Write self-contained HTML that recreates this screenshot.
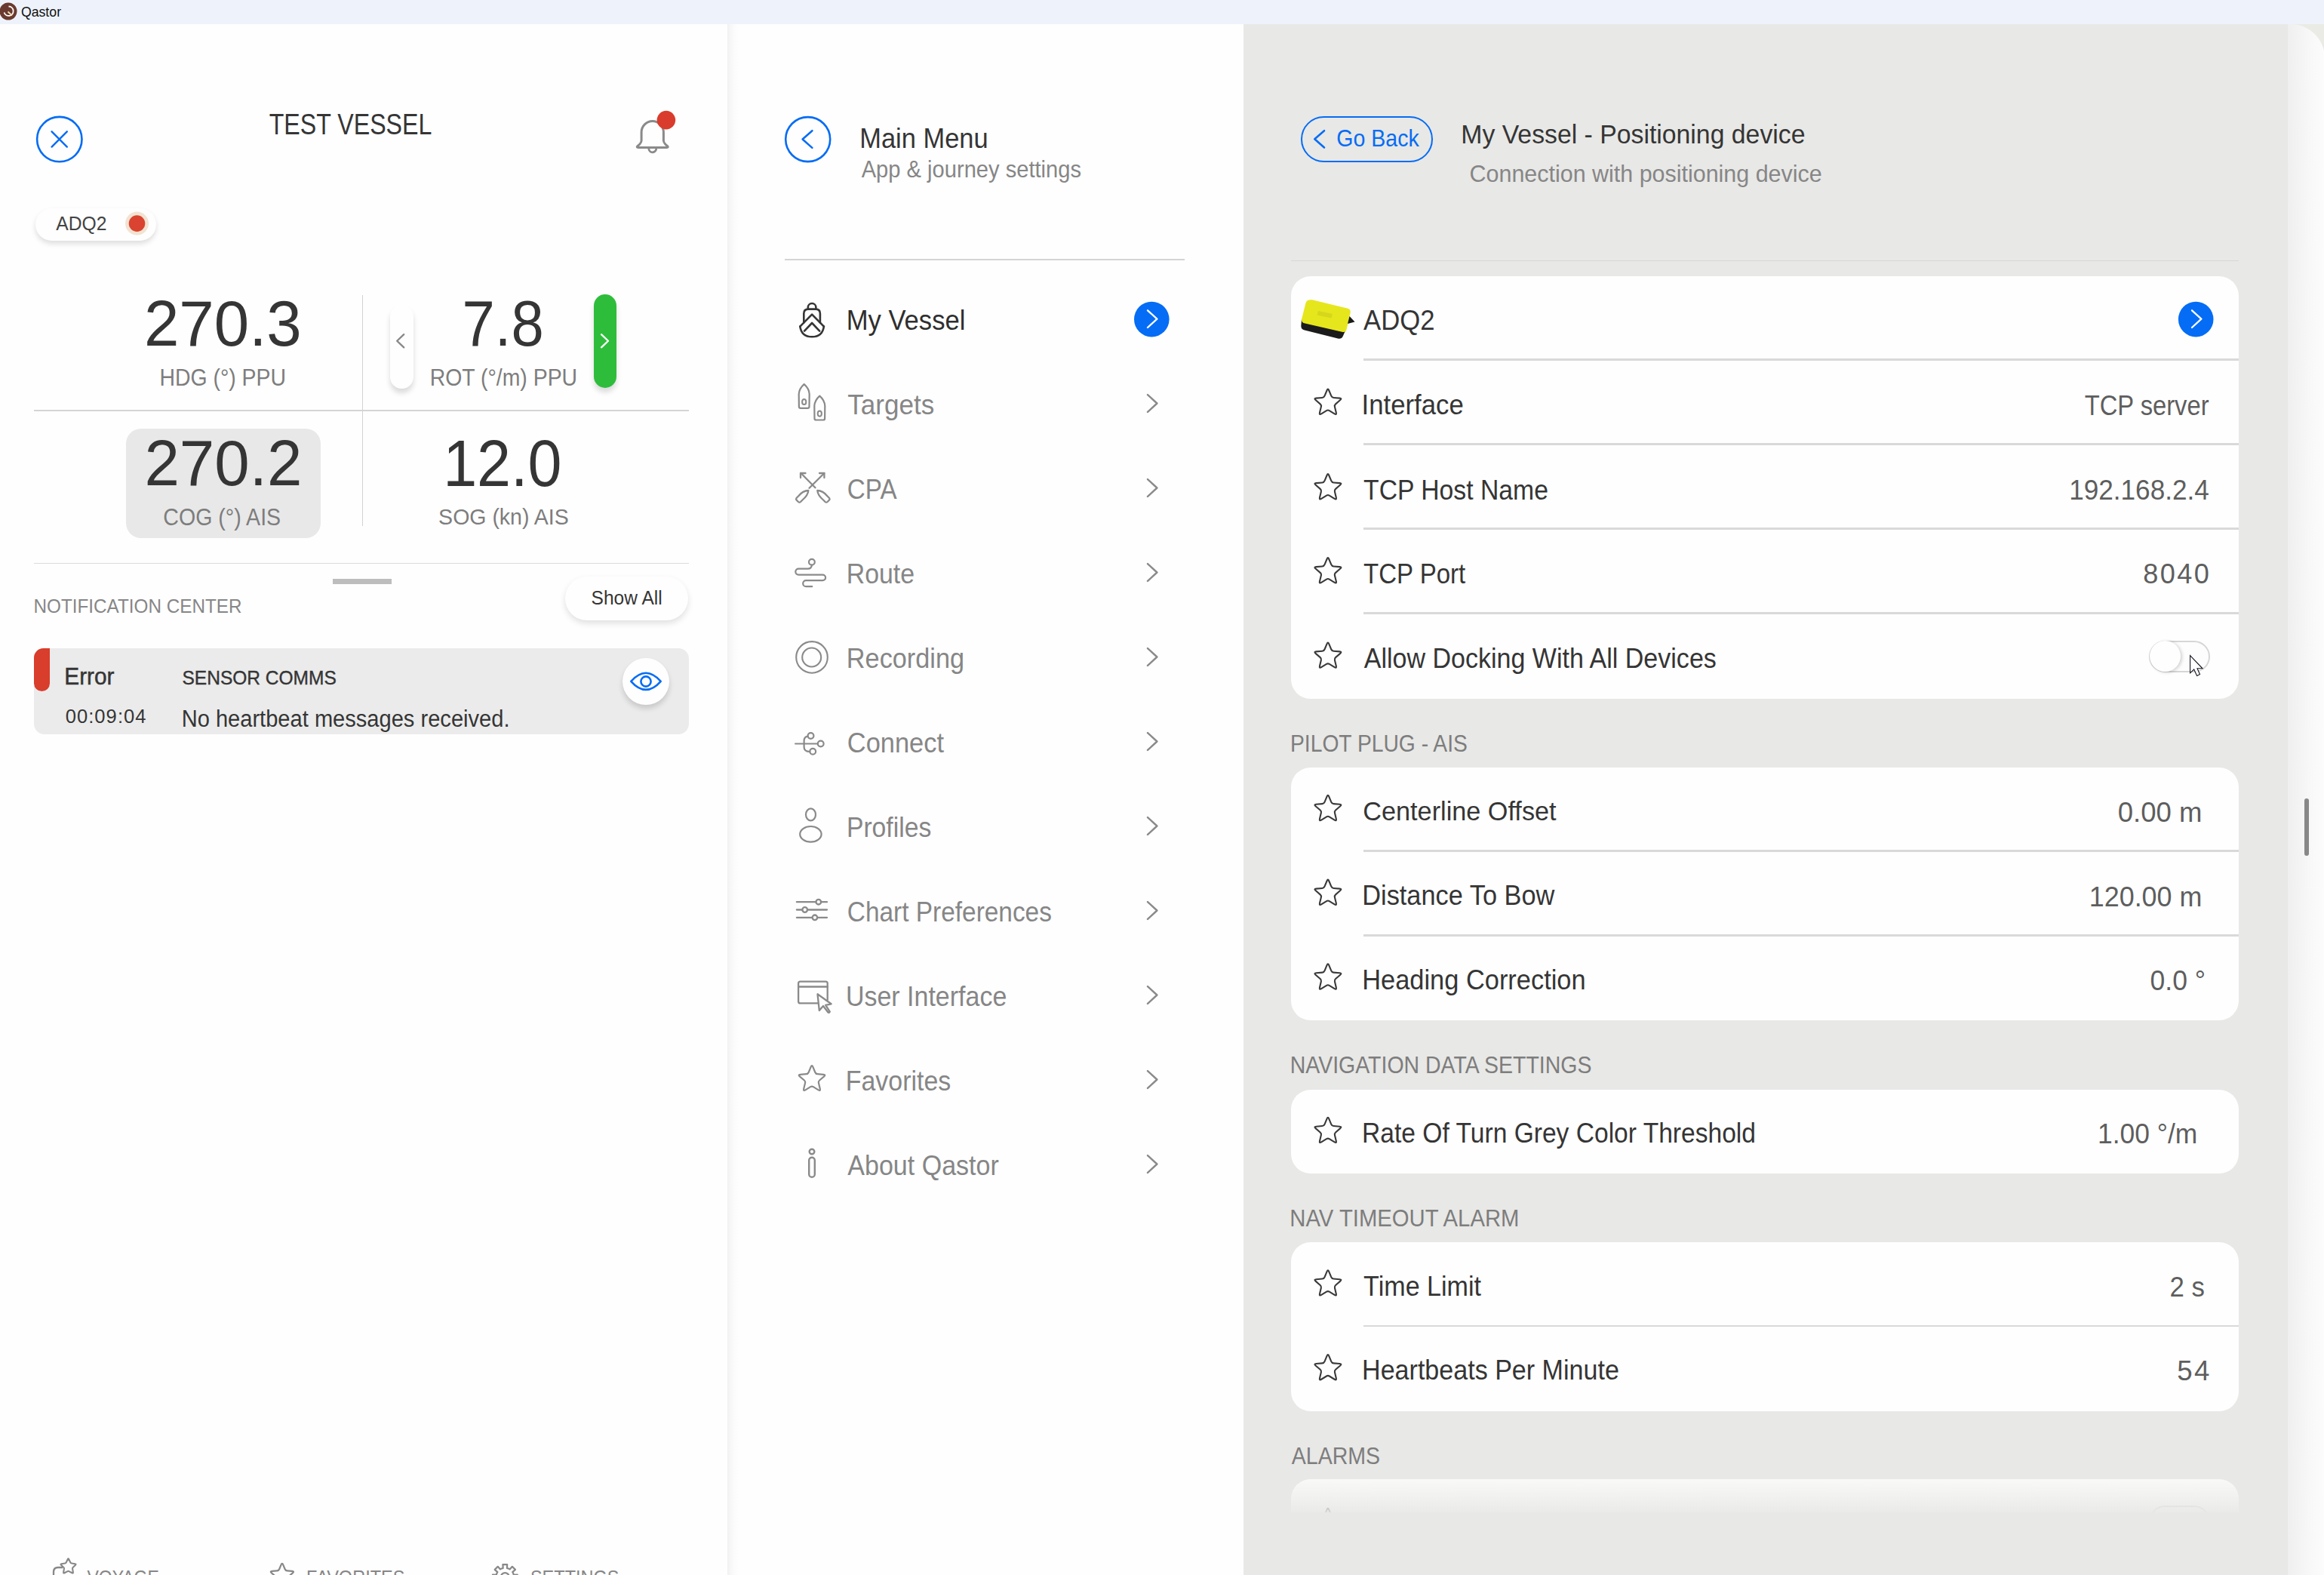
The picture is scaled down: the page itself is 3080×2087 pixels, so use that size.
<!DOCTYPE html>
<html><head><meta charset="utf-8"><style>
html,body{margin:0;padding:0;width:3080px;height:2087px;overflow:hidden;background:#fefefe}
#root>div{position:absolute}
svg{position:absolute;left:0;top:0}
text{font-family:"Liberation Sans",sans-serif;white-space:pre}
</style></head><body><div id="root">
<div style="left:0px;top:0px;width:3080px;height:32px;background:#eef3fb"></div>
<div style="left:0px;top:32px;width:964px;height:2055px;background:#fefefe"></div>
<div style="left:964px;top:32px;width:684px;height:2055px;background:linear-gradient(90deg,#f1f1f1 0px,#f7f7f7 4px,#fcfcfc 10px,#fefefe 16px)"></div>
<div style="left:1648px;top:32px;width:1384px;height:2055px;background:#e8e8e6"></div>
<div style="left:3032px;top:32px;width:48px;height:60px;background:#eaebe5"></div>
<div style="left:3032px;top:32px;width:49px;height:2055px;border-top-right-radius:45px;background:linear-gradient(90deg,#efefef 0px,#f2f2f2 10px,#f8f8f8 30px,#fcfcfc 48px)"></div>
<div style="left:47.2px;top:276.4px;width:160px;height:43px;background:#fefefe;border-radius:22px;box-shadow:0 4px 7px rgba(0,0,0,0.13)"></div>
<div style="left:479.5px;top:391px;width:1.3px;height:306px;background:#d2d2d2"></div>
<div style="left:45px;top:543px;width:868px;height:2px;background:#d4d4d4"></div>
<div style="left:45px;top:745.5px;width:868px;height:1.5px;background:#dcdcdc"></div>
<div style="left:517px;top:404px;width:31px;height:110.5px;background:#fefefe;border-radius:15.5px;box-shadow:0 6px 7px rgba(0,0,0,0.14)"></div>
<div style="left:787px;top:390.4px;width:30px;height:124px;background:#2ebd3b;border-radius:15px;box-shadow:0 6px 7px rgba(0,0,0,0.14)"></div>
<div style="left:166.5px;top:568px;width:258.5px;height:145px;background:#e8e8e8;border-radius:20px"></div>
<div style="left:441px;top:767px;width:78px;height:6.5px;background:#bdbdbd"></div>
<div style="left:749px;top:764px;width:162.5px;height:58px;background:#fefefe;border-radius:29px;box-shadow:0 4px 8px rgba(0,0,0,0.12)"></div>
<div style="left:45px;top:859px;width:867.5px;height:113.5px;background:#ebebeb;border-radius:14px"></div>
<div style="left:45px;top:859px;width:21px;height:56.5px;background:#d93d2b;border-radius:13px 0 11px 11px"></div>
<div style="left:824.8px;top:871.5px;width:62px;height:62px;background:#fefefe;border-radius:50%;box-shadow:0 5px 7px rgba(0,0,0,0.15)"></div>
<div style="left:1040px;top:343px;width:530px;height:2px;background:#d4d4d4"></div>
<div style="left:1711px;top:345px;width:1256px;height:1px;background:#d7d7d7"></div>
<div style="left:1711px;top:366px;width:1256px;height:560px;background:#fefefe;border-radius:26px"></div>
<div style="left:1711px;top:1017px;width:1256px;height:335px;background:#fefefe;border-radius:26px"></div>
<div style="left:1711px;top:1444px;width:1256px;height:110.5px;background:#fefefe;border-radius:26px"></div>
<div style="left:1711px;top:1646px;width:1256px;height:223.5px;background:#fefefe;border-radius:26px"></div>
<div style="left:1711px;top:1960px;width:1256px;height:200px;background:#fefefe;border-radius:26px"></div>
<div style="left:1807px;top:475.3px;width:1160px;height:2.6px;background:#d9d9d9"></div>
<div style="left:1807px;top:587.3px;width:1160px;height:2.6px;background:#d9d9d9"></div>
<div style="left:1807px;top:699.2px;width:1160px;height:2.6px;background:#d9d9d9"></div>
<div style="left:1807px;top:811.2px;width:1160px;height:2.6px;background:#d9d9d9"></div>
<div style="left:1807px;top:1126px;width:1160px;height:2.6px;background:#d9d9d9"></div>
<div style="left:1807px;top:1238px;width:1160px;height:2.6px;background:#d9d9d9"></div>
<div style="left:1807px;top:1755.5px;width:1160px;height:2.6px;background:#d9d9d9"></div>
<div style="left:1724px;top:153.6px;width:175.3px;height:61.8px;box-sizing:border-box;border:2.6px solid #056cf5;border-radius:31px"></div>
<div style="left:2848px;top:848.6px;width:80.6px;height:42px;box-sizing:border-box;border:2px solid #d6d6d6;border-radius:21px;background:#fdfdfd"></div>
<div style="left:2848.5px;top:849px;width:41px;height:41px;border-radius:50%;background:#fefefe;box-shadow:2px 1px 4px rgba(0,0,0,0.18)"></div>
<div style="left:2848px;top:1995px;width:80.6px;height:42px;box-sizing:border-box;border:2px solid #d6d6d6;border-radius:21px;background:#fdfdfd"></div>
<div style="left:3054px;top:1057.7px;width:6px;height:76.3px;background:#888;border-radius:3px"></div>
</div>
<svg width="3080" height="2087" viewBox="0 0 3080 2087">
<circle cx="11" cy="15" r="11.5" fill="#6b3a2f"/><path d="M5.5,16.5 A6.2,6.2 0 1 0 11.5,8.5" fill="none" stroke="#fff" stroke-width="1.8"/><path d="M10.5,15.5 L16,20.5" stroke="#f3dcb0" stroke-width="1.8"/>
<circle cx="78.8" cy="184.6" r="29.7" fill="none" stroke="#056cf5" stroke-width="2.6"/>
<path d="M68.6,174.3 L88.8,194.6 M88.8,174.3 L68.6,194.6" stroke="#056cf5" stroke-width="2.4" stroke-linecap="round"/>
<path d="M850.1,186.5 L850.1,175.2 A14.65,14.65 0 0 1 879.4,175.2 L879.4,186.5 Q879.6,189 882,191.3 L884.6,193.6 Q886.2,195.4 883.8,195.4 L845.7,195.4 Q843.3,195.4 844.9,193.6 L847.5,191.3 Q849.9,189 850.1,186.5 Z" fill="none" stroke="#8a8a8a" stroke-width="3" stroke-linejoin="round"/>
<path d="M859.8,196.8 A5,5 0 0 0 869.8,196.8" fill="none" stroke="#8a8a8a" stroke-width="2.8"/>
<circle cx="882.9" cy="159.1" r="12.3" fill="#d93c2c"/>
<circle cx="181.5" cy="296.1" r="15.5" fill="#f2e3d2"/><circle cx="181.5" cy="296.1" r="10.8" fill="#d9432f"/>
<path d="M535.2,443.2 L526.2,451.75 L535.2,460.3" fill="none" stroke="#888" stroke-width="2.4" stroke-linecap="round" stroke-linejoin="round"/>
<path d="M797,443.2 L806,451.75 L797,460.3" fill="none" stroke="#fff" stroke-width="2.3" stroke-linecap="round" stroke-linejoin="round"/>
<path d="M836.3,902.8 Q856,880.6 875.7,902.8 Q856,925 836.3,902.8 Z" fill="none" stroke="#056cf5" stroke-width="2.6" stroke-linejoin="round"/><circle cx="856" cy="903" r="6.6" fill="none" stroke="#056cf5" stroke-width="2.6"/>
<path d="M71,2087 L71,2083 Q71,2077 77,2077 L83,2077" fill="none" stroke="#888" stroke-width="2.3"/>
<path d="M89.70,2066.21 Q90.50,2064.60 91.30,2066.21 L93.39,2070.45 Q93.83,2071.35 94.82,2071.49 L99.50,2072.17 Q101.28,2072.43 99.99,2073.69 L96.60,2076.99 Q95.89,2077.68 96.06,2078.67 L96.86,2083.33 Q97.16,2085.10 95.57,2084.26 L91.39,2082.06 Q90.50,2081.60 89.61,2082.06 L85.43,2084.26 Q83.84,2085.10 84.14,2083.33 L84.94,2078.67 Q85.11,2077.68 84.40,2076.99 L81.01,2073.69 Q79.72,2072.43 81.50,2072.17 L86.18,2071.49 Q87.17,2071.35 87.61,2070.45Z" fill="none" stroke="#888" stroke-width="2.1" stroke-linejoin="round"/>
<path d="M372.59,2073.34 Q373.90,2070.20 375.21,2073.34 L377.65,2079.21 Q378.49,2081.24 380.68,2081.41 L387.02,2081.92 Q390.41,2082.19 387.83,2084.41 L383.00,2088.54 Q381.33,2089.97 381.84,2092.11 L383.31,2098.29 Q384.10,2101.60 381.20,2099.83 L375.78,2096.52 Q373.90,2095.37 372.02,2096.52 L366.60,2099.83 Q363.70,2101.60 364.49,2098.29 L365.96,2092.11 Q366.47,2089.97 364.80,2088.54 L359.97,2084.41 Q357.39,2082.19 360.78,2081.92 L367.12,2081.41 Q369.31,2081.24 370.15,2079.21Z" fill="none" stroke="#888" stroke-width="2.2" stroke-linejoin="round"/>
<path d="M665.56,2078.21 L666.65,2077.90 L666.42,2073.05 L672.18,2073.05 L671.95,2077.90 L673.04,2078.21 L674.57,2078.84 L675.55,2079.39 L678.82,2075.80 L682.90,2079.88 L679.31,2083.15 L679.86,2084.13 L680.49,2085.66 L680.80,2086.75 L685.65,2086.52 L685.65,2092.28 L680.80,2092.05 L680.49,2093.14 L679.86,2094.67 L679.31,2095.65 L682.90,2098.92 L678.82,2103.00 L675.55,2099.41 L674.57,2099.96 L673.04,2100.59 L671.95,2100.90 L672.18,2105.75 L666.42,2105.75 L666.65,2100.90 L665.56,2100.59 L664.03,2099.96 L663.05,2099.41 L659.78,2103.00 L655.70,2098.92 L659.29,2095.65 L658.74,2094.67 L658.11,2093.14 L657.80,2092.05 L652.95,2092.28 L652.95,2086.52 L657.80,2086.75 L658.11,2085.66 L658.74,2084.13 L659.29,2083.15 L655.70,2079.88 L659.78,2075.80 L663.05,2079.39 L664.03,2078.84Z" fill="none" stroke="#888" stroke-width="2.2" stroke-linejoin="round"/><circle cx="669.3" cy="2089.4" r="5.3" fill="none" stroke="#888" stroke-width="2.2"/>
<circle cx="1070.7" cy="184.6" r="29.5" fill="none" stroke="#056cf5" stroke-width="2.6"/>
<path d="M1076.4,173.2 L1063.6,184.55 L1076.4,195.9" fill="none" stroke="#056cf5" stroke-width="2.5" stroke-linecap="round" stroke-linejoin="round"/>
<circle cx="1526.3" cy="423.1" r="23.3" fill="#056cf5"/>
<path d="M1521,411.3 L1533.4,422.65 L1521,434" fill="none" stroke="#fff" stroke-width="2.3" stroke-linecap="round" stroke-linejoin="round"/>
<path d="M1521,523.1 L1533.4,534.5 L1521,545.9" fill="none" stroke="#8a8a8a" stroke-width="2.4" stroke-linecap="round" stroke-linejoin="round"/>
<path d="M1521,635.1 L1533.4,646.5 L1521,657.9" fill="none" stroke="#8a8a8a" stroke-width="2.4" stroke-linecap="round" stroke-linejoin="round"/>
<path d="M1521,747.1 L1533.4,758.5 L1521,769.9" fill="none" stroke="#8a8a8a" stroke-width="2.4" stroke-linecap="round" stroke-linejoin="round"/>
<path d="M1521,859.1 L1533.4,870.5 L1521,881.9" fill="none" stroke="#8a8a8a" stroke-width="2.4" stroke-linecap="round" stroke-linejoin="round"/>
<path d="M1521,971.1 L1533.4,982.5 L1521,993.9" fill="none" stroke="#8a8a8a" stroke-width="2.4" stroke-linecap="round" stroke-linejoin="round"/>
<path d="M1521,1083.1 L1533.4,1094.5 L1521,1105.9" fill="none" stroke="#8a8a8a" stroke-width="2.4" stroke-linecap="round" stroke-linejoin="round"/>
<path d="M1521,1195.1 L1533.4,1206.5 L1521,1217.9" fill="none" stroke="#8a8a8a" stroke-width="2.4" stroke-linecap="round" stroke-linejoin="round"/>
<path d="M1521,1307.1 L1533.4,1318.5 L1521,1329.9" fill="none" stroke="#8a8a8a" stroke-width="2.4" stroke-linecap="round" stroke-linejoin="round"/>
<path d="M1521,1419.1 L1533.4,1430.5 L1521,1441.9" fill="none" stroke="#8a8a8a" stroke-width="2.4" stroke-linecap="round" stroke-linejoin="round"/>
<path d="M1521,1531.1 L1533.4,1542.5 L1521,1553.9" fill="none" stroke="#8a8a8a" stroke-width="2.4" stroke-linecap="round" stroke-linejoin="round"/>
<g fill="none" stroke="#353535" stroke-width="2.6" stroke-linejoin="round" stroke-linecap="round"><path d="M1070.8,409 L1070.8,407.3 A5.3,5.3 0 0 1 1081.4,407.3 L1081.4,409"/><path d="M1065.3,427.5 L1065.3,415.5 Q1065.3,409.6 1071.3,409.6 L1080.9,409.6 Q1086.9,409.6 1086.9,415.5 L1086.9,427.5"/><path d="M1060.3,432.6 L1076.1,416.6 L1091.9,432.6"/><path d="M1066,438.6 L1076.1,428 L1086.2,438.6"/><path d="M1060.3,432.6 Q1062.3,446.3 1076.1,446.3 Q1089.9,446.3 1091.9,432.6"/></g>
<path d="M1058.9,539 L1058.7,522.28 Q1059.2,514.8 1065.7,509.2 Q1072.2,514.8 1072.7,522.28 L1072.5,539 Q1072.5,540.8 1070.2,540.8 L1061.2,540.8 Q1058.9,540.8 1058.9,539 Z" fill="none" stroke="#8a8a8a" stroke-width="2.2" stroke-linejoin="round"/><ellipse cx="1065.7" cy="532.48" rx="2.6" ry="3.6" fill="none" stroke="#8a8a8a" stroke-width="2"/>
<path d="M1079.5,554.6999999999999 L1079.3,537.8059999999999 Q1079.8,530.26 1086.3,524.6 Q1092.8,530.26 1093.3,537.8059999999999 L1093.1,554.6999999999999 Q1093.1,556.4999999999999 1090.8,556.4999999999999 L1081.8,556.4999999999999 Q1079.5,556.4999999999999 1079.5,554.6999999999999 Z" fill="none" stroke="#8a8a8a" stroke-width="2.2" stroke-linejoin="round"/><ellipse cx="1086.3" cy="548.096" rx="2.6" ry="3.6" fill="none" stroke="#8a8a8a" stroke-width="2"/>
<g fill="none" stroke="#8a8a8a" stroke-width="2.3" stroke-linecap="round" stroke-linejoin="round"><path d="M1061.5,627 L1080.5,646.3 M1092.4,627 L1072.5,646.8"/><path d="M1061,633 L1061,627 L1067.5,627 M1086,627 L1092.4,627 L1092.4,633"/><path d="M1071.3,650 Q1064,650 1058,657.5 L1055.5,660 Q1054.5,661.5 1056,663 L1058,665 Q1059.5,666.3 1061,665 L1063.5,662.5 Q1071,656 1071.3,650 Z"/><path d="M1083.3,650 Q1090.6,650 1096.6,657.5 L1099.1,660 Q1100.1,661.5 1098.6,663 L1096.6,665 Q1095.1,666.3 1093.6,665 L1091.1,662.5 Q1083.6,656 1083.3,650 Z"/></g>
<g fill="none" stroke="#8a8a8a" stroke-width="2.2" stroke-linecap="round"><circle cx="1075.9" cy="744.7" r="3.9"/><path d="M1075.9,748.6 Q1075.6,753.6 1070.5,753.6 L1058.3,753.6 A4,4 0 0 0 1058.3,761.6 L1090.3,761.6 A3.8,3.8 0 0 1 1090.3,769.2 L1068.2,769.2 A4,4 0 0 0 1068.2,777.2 L1076.2,777.2"/></g>
<circle cx="1076" cy="870.9" r="20.8" fill="none" stroke="#8a8a8a" stroke-width="2.1"/><circle cx="1075.7" cy="871" r="12.5" fill="none" stroke="#8a8a8a" stroke-width="2.1"/>
<g fill="none" stroke="#8a8a8a" stroke-width="2.2" stroke-linecap="round"><path d="M1054.1,985.5 L1083.8,985.5"/><path d="M1070.6,975.6 Q1065.6,976.5 1065.6,981.5 L1065.6,990 Q1065.6,996 1073.3,996"/><circle cx="1074.5" cy="975" r="3.9"/><circle cx="1087.7" cy="985.5" r="3.9"/><circle cx="1077.2" cy="995.8" r="3.9"/></g>
<g fill="none" stroke="#8a8a8a" stroke-width="2.2"><ellipse cx="1074.5" cy="1079.4" rx="6.5" ry="8"/><ellipse cx="1074.4" cy="1105.3" rx="14.2" ry="10.3"/></g>
<g fill="none" stroke="#8a8a8a" stroke-width="2.3" stroke-linecap="round"><path d="M1055.9,1195.2 L1096,1195.2 M1055.9,1205.5 L1096,1205.5 M1055.9,1215.8 L1096,1215.8"/><circle cx="1084.8" cy="1195.2" r="3.3" fill="#fefefe"/><circle cx="1066.7" cy="1205.5" r="3.3" fill="#fefefe"/><circle cx="1079.9" cy="1215.8" r="3.3" fill="#fefefe"/></g>
<g fill="none" stroke="#8a8a8a" stroke-width="2.3" stroke-linejoin="round" stroke-linecap="round"><path d="M1084,1329.4 L1060.6,1329.4 Q1058.1,1329.4 1058.1,1326.9 L1058.1,1303.1 Q1058.1,1300.6 1060.6,1300.6 L1094.2,1300.6 Q1096.7,1300.6 1096.7,1303.1 L1096.7,1325"/><path d="M1058.1,1307.5 L1096.7,1307.5"/><path d="M1083.5,1317.3 L1085.8,1339 L1091,1333 L1097.3,1341.3 Q1098.8,1342.6 1099.8,1340.6 L1094.2,1331.8 L1101.6,1330.3 Z" fill="#fefefe"/></g>
<path d="M1074.69,1413.64 Q1076.00,1410.50 1077.31,1413.64 L1080.36,1420.98 Q1081.21,1423.01 1083.40,1423.19 L1091.33,1423.83 Q1094.72,1424.10 1092.13,1426.31 L1086.09,1431.48 Q1084.42,1432.92 1084.93,1435.06 L1086.78,1442.79 Q1087.57,1446.10 1084.67,1444.33 L1077.88,1440.18 Q1076.00,1439.03 1074.12,1440.18 L1067.33,1444.33 Q1064.43,1446.10 1065.22,1442.79 L1067.07,1435.06 Q1067.58,1432.92 1065.91,1431.48 L1059.87,1426.31 Q1057.28,1424.10 1060.67,1423.83 L1068.60,1423.19 Q1070.79,1423.01 1071.64,1420.98Z" fill="none" stroke="#8a8a8a" stroke-width="2.2" stroke-linejoin="round"/>
<g fill="none" stroke="#8a8a8a" stroke-width="2.4"><circle cx="1076" cy="1526" r="3.3"/><rect x="1072.2" y="1533.7" width="7.6" height="26" rx="3.8"/></g>
<path d="M1755,173.2 L1742.3,184.3 L1755,195.4" fill="none" stroke="#056cf5" stroke-width="2.6" stroke-linecap="round" stroke-linejoin="round"/>
<circle cx="2910.2" cy="423.1" r="23.3" fill="#056cf5"/>
<path d="M2905,411.3 L2917.4,422.65 L2905,434" fill="none" stroke="#fff" stroke-width="2.3" stroke-linecap="round" stroke-linejoin="round"/>
<path d="M1725,423 L1724.3,432 Q1724.3,436.5 1729,437.6 L1773,448.6 Q1778,449.8 1780,445 L1783.5,437 Z" fill="#1b1b1b"/><path d="M1739,397.3 L1785.5,408.6 Q1790.5,410 1789.6,414.5 L1784.6,436.5 Q1783.5,441 1778.5,439.8 L1729.5,428.6 Q1724.2,427.4 1725.2,422.5 L1730.5,401.5 Q1731.8,396.6 1739,397.3 Z" fill="#e6e61c"/><path d="M1747,412 L1766,416 L1764.5,421.5 L1745.5,417.5 Z" fill="#d2d21e" opacity="0.8"/><path d="M1788.5,419 L1795.5,426.5 L1786,429 Z" fill="#1b1b1b"/>
<path d="M1758.59,517.24 Q1759.90,514.10 1761.21,517.24 L1764.32,524.72 Q1765.16,526.76 1767.36,526.93 L1775.44,527.58 Q1778.83,527.85 1776.24,530.06 L1770.09,535.34 Q1768.42,536.77 1768.93,538.91 L1770.81,546.79 Q1771.60,550.10 1768.70,548.33 L1761.78,544.10 Q1759.90,542.96 1758.02,544.10 L1751.10,548.33 Q1748.20,550.10 1748.99,546.79 L1750.87,538.91 Q1751.38,536.77 1749.71,535.34 L1743.56,530.06 Q1740.97,527.85 1744.36,527.58 L1752.44,526.93 Q1754.64,526.76 1755.48,524.72Z" fill="none" stroke="#3a3a3a" stroke-width="2.1" stroke-linejoin="round"/>
<path d="M1758.59,629.74 Q1759.90,626.60 1761.21,629.74 L1764.32,637.22 Q1765.16,639.26 1767.36,639.43 L1775.44,640.08 Q1778.83,640.35 1776.24,642.56 L1770.09,647.84 Q1768.42,649.27 1768.93,651.41 L1770.81,659.29 Q1771.60,662.60 1768.70,660.83 L1761.78,656.60 Q1759.90,655.46 1758.02,656.60 L1751.10,660.83 Q1748.20,662.60 1748.99,659.29 L1750.87,651.41 Q1751.38,649.27 1749.71,647.84 L1743.56,642.56 Q1740.97,640.35 1744.36,640.08 L1752.44,639.43 Q1754.64,639.26 1755.48,637.22Z" fill="none" stroke="#3a3a3a" stroke-width="2.1" stroke-linejoin="round"/>
<path d="M1758.59,740.74 Q1759.90,737.60 1761.21,740.74 L1764.32,748.22 Q1765.16,750.26 1767.36,750.43 L1775.44,751.08 Q1778.83,751.35 1776.24,753.56 L1770.09,758.84 Q1768.42,760.27 1768.93,762.41 L1770.81,770.29 Q1771.60,773.60 1768.70,771.83 L1761.78,767.60 Q1759.90,766.46 1758.02,767.60 L1751.10,771.83 Q1748.20,773.60 1748.99,770.29 L1750.87,762.41 Q1751.38,760.27 1749.71,758.84 L1743.56,753.56 Q1740.97,751.35 1744.36,751.08 L1752.44,750.43 Q1754.64,750.26 1755.48,748.22Z" fill="none" stroke="#3a3a3a" stroke-width="2.1" stroke-linejoin="round"/>
<path d="M1758.59,853.04 Q1759.90,849.90 1761.21,853.04 L1764.32,860.52 Q1765.16,862.56 1767.36,862.73 L1775.44,863.38 Q1778.83,863.65 1776.24,865.86 L1770.09,871.14 Q1768.42,872.57 1768.93,874.71 L1770.81,882.59 Q1771.60,885.90 1768.70,884.13 L1761.78,879.90 Q1759.90,878.76 1758.02,879.90 L1751.10,884.13 Q1748.20,885.90 1748.99,882.59 L1750.87,874.71 Q1751.38,872.57 1749.71,871.14 L1743.56,865.86 Q1740.97,863.65 1744.36,863.38 L1752.44,862.73 Q1754.64,862.56 1755.48,860.52Z" fill="none" stroke="#3a3a3a" stroke-width="2.1" stroke-linejoin="round"/>
<path d="M1758.59,1055.44 Q1759.90,1052.30 1761.21,1055.44 L1764.32,1062.92 Q1765.16,1064.96 1767.36,1065.13 L1775.44,1065.78 Q1778.83,1066.05 1776.24,1068.26 L1770.09,1073.54 Q1768.42,1074.97 1768.93,1077.11 L1770.81,1084.99 Q1771.60,1088.30 1768.70,1086.53 L1761.78,1082.30 Q1759.90,1081.16 1758.02,1082.30 L1751.10,1086.53 Q1748.20,1088.30 1748.99,1084.99 L1750.87,1077.11 Q1751.38,1074.97 1749.71,1073.54 L1743.56,1068.26 Q1740.97,1066.05 1744.36,1065.78 L1752.44,1065.13 Q1754.64,1064.96 1755.48,1062.92Z" fill="none" stroke="#3a3a3a" stroke-width="2.1" stroke-linejoin="round"/>
<path d="M1758.59,1167.24 Q1759.90,1164.10 1761.21,1167.24 L1764.32,1174.72 Q1765.16,1176.76 1767.36,1176.93 L1775.44,1177.58 Q1778.83,1177.85 1776.24,1180.06 L1770.09,1185.34 Q1768.42,1186.77 1768.93,1188.91 L1770.81,1196.79 Q1771.60,1200.10 1768.70,1198.33 L1761.78,1194.10 Q1759.90,1192.96 1758.02,1194.10 L1751.10,1198.33 Q1748.20,1200.10 1748.99,1196.79 L1750.87,1188.91 Q1751.38,1186.77 1749.71,1185.34 L1743.56,1180.06 Q1740.97,1177.85 1744.36,1177.58 L1752.44,1176.93 Q1754.64,1176.76 1755.48,1174.72Z" fill="none" stroke="#3a3a3a" stroke-width="2.1" stroke-linejoin="round"/>
<path d="M1758.59,1278.94 Q1759.90,1275.80 1761.21,1278.94 L1764.32,1286.42 Q1765.16,1288.46 1767.36,1288.63 L1775.44,1289.28 Q1778.83,1289.55 1776.24,1291.76 L1770.09,1297.04 Q1768.42,1298.47 1768.93,1300.61 L1770.81,1308.49 Q1771.60,1311.80 1768.70,1310.03 L1761.78,1305.80 Q1759.90,1304.66 1758.02,1305.80 L1751.10,1310.03 Q1748.20,1311.80 1748.99,1308.49 L1750.87,1300.61 Q1751.38,1298.47 1749.71,1297.04 L1743.56,1291.76 Q1740.97,1289.55 1744.36,1289.28 L1752.44,1288.63 Q1754.64,1288.46 1755.48,1286.42Z" fill="none" stroke="#3a3a3a" stroke-width="2.1" stroke-linejoin="round"/>
<path d="M1758.59,1482.34 Q1759.90,1479.20 1761.21,1482.34 L1764.32,1489.82 Q1765.16,1491.86 1767.36,1492.03 L1775.44,1492.68 Q1778.83,1492.95 1776.24,1495.16 L1770.09,1500.44 Q1768.42,1501.87 1768.93,1504.01 L1770.81,1511.89 Q1771.60,1515.20 1768.70,1513.43 L1761.78,1509.20 Q1759.90,1508.06 1758.02,1509.20 L1751.10,1513.43 Q1748.20,1515.20 1748.99,1511.89 L1750.87,1504.01 Q1751.38,1501.87 1749.71,1500.44 L1743.56,1495.16 Q1740.97,1492.95 1744.36,1492.68 L1752.44,1492.03 Q1754.64,1491.86 1755.48,1489.82Z" fill="none" stroke="#3a3a3a" stroke-width="2.1" stroke-linejoin="round"/>
<path d="M1758.59,1684.84 Q1759.90,1681.70 1761.21,1684.84 L1764.32,1692.32 Q1765.16,1694.36 1767.36,1694.53 L1775.44,1695.18 Q1778.83,1695.45 1776.24,1697.66 L1770.09,1702.94 Q1768.42,1704.37 1768.93,1706.51 L1770.81,1714.39 Q1771.60,1717.70 1768.70,1715.93 L1761.78,1711.70 Q1759.90,1710.56 1758.02,1711.70 L1751.10,1715.93 Q1748.20,1717.70 1748.99,1714.39 L1750.87,1706.51 Q1751.38,1704.37 1749.71,1702.94 L1743.56,1697.66 Q1740.97,1695.45 1744.36,1695.18 L1752.44,1694.53 Q1754.64,1694.36 1755.48,1692.32Z" fill="none" stroke="#3a3a3a" stroke-width="2.1" stroke-linejoin="round"/>
<path d="M1758.59,1796.64 Q1759.90,1793.50 1761.21,1796.64 L1764.32,1804.12 Q1765.16,1806.16 1767.36,1806.33 L1775.44,1806.98 Q1778.83,1807.25 1776.24,1809.46 L1770.09,1814.74 Q1768.42,1816.17 1768.93,1818.31 L1770.81,1826.19 Q1771.60,1829.50 1768.70,1827.73 L1761.78,1823.50 Q1759.90,1822.36 1758.02,1823.50 L1751.10,1827.73 Q1748.20,1829.50 1748.99,1826.19 L1750.87,1818.31 Q1751.38,1816.17 1749.71,1814.74 L1743.56,1809.46 Q1740.97,1807.25 1744.36,1806.98 L1752.44,1806.33 Q1754.64,1806.16 1755.48,1804.12Z" fill="none" stroke="#3a3a3a" stroke-width="2.1" stroke-linejoin="round"/>
<path d="M1758.59,2000.34 Q1759.90,1997.20 1761.21,2000.34 L1764.32,2007.82 Q1765.16,2009.86 1767.36,2010.03 L1775.44,2010.68 Q1778.83,2010.95 1776.24,2013.16 L1770.09,2018.44 Q1768.42,2019.87 1768.93,2022.01 L1770.81,2029.89 Q1771.60,2033.20 1768.70,2031.43 L1761.78,2027.20 Q1759.90,2026.06 1758.02,2027.20 L1751.10,2031.43 Q1748.20,2033.20 1748.99,2029.89 L1750.87,2022.01 Q1751.38,2019.87 1749.71,2018.44 L1743.56,2013.16 Q1740.97,2010.95 1744.36,2010.68 L1752.44,2010.03 Q1754.64,2009.86 1755.48,2007.82Z" fill="none" stroke="#3a3a3a" stroke-width="2.1" stroke-linejoin="round"/>
<path d="M2902.6,868.6 L2902.6,891.8 L2907.7,887 L2911.6,895.4 L2915.5,893.6 L2912,885.8 L2919,885.8 Z" fill="#fff" stroke="#151520" stroke-width="1.1" stroke-linejoin="miter"/>
<text transform="translate(27.90,21.90) scale(0.9615,1)" font-size="18.43" fill="#111">Qastor</text>
<text transform="translate(356.66,178.10) scale(0.8443,1)" font-size="38.12" fill="#353535">TEST VESSEL</text>
<text transform="translate(74.30,304.80) scale(0.9622,1)" font-size="25.65" fill="#444">ADQ2</text>
<text transform="translate(190.93,457.80) scale(0.9867,1)" font-size="84.57" fill="#353535">270.3</text>
<text transform="translate(211.43,510.80) scale(0.9202,1)" font-size="30.87" fill="#7d7d7d">HDG (°) PPU</text>
<text transform="translate(612.61,458.00) scale(0.9111,1)" font-size="85.36" fill="#353535">7.8</text>
<text transform="translate(569.63,510.90) scale(0.9205,1)" font-size="30.87" fill="#7d7d7d">ROT (°/m) PPU</text>
<text transform="translate(191.42,643.30) scale(0.9890,1)" font-size="84.43" fill="#353535">270.2</text>
<text transform="translate(216.37,695.60) scale(0.9380,1)" font-size="30.43" fill="#7d7d7d">COG (°) AIS</text>
<text transform="translate(587.13,643.70) scale(0.9362,1)" font-size="86.38" fill="#353535">12.0</text>
<text transform="translate(581.12,695.30) scale(0.9593,1)" font-size="29.71" fill="#7d7d7d">SOG (kn) AIS</text>
<text transform="translate(44.56,812.00) scale(0.9305,1)" font-size="26.09" fill="#868686">NOTIFICATION CENTER</text>
<text transform="translate(783.60,800.80) scale(0.9702,1)" font-size="25.29" fill="#353535">Show All</text>
<text transform="translate(85.32,906.80) scale(0.9260,1)" font-size="32.17" fill="#353535" stroke="#353535" stroke-width="0.5">Error</text>
<text transform="translate(241.50,906.80) scale(0.9334,1)" font-size="26.29" fill="#353535" stroke="#353535" stroke-width="0.4">SENSOR COMMS</text>
<text transform="translate(86.68,958.20)" font-size="25.57" letter-spacing="1.046" fill="#353535">00:09:04</text>
<text transform="translate(240.67,963.00) scale(0.9422,1)" font-size="30.87" fill="#353535">No heartbeat messages received.</text>
<text transform="translate(115.38,2099.40) scale(0.8824,1)" font-size="26.09" fill="#868686">VOYAGE</text>
<text transform="translate(406.12,2099.40) scale(0.9026,1)" font-size="26.09" fill="#868686">FAVORITES</text>
<text transform="translate(702.94,2099.40) scale(0.9142,1)" font-size="25.71" fill="#868686">SETTINGS</text>
<text transform="translate(1139.24,195.70) scale(0.9511,1)" font-size="36.23" fill="#353535">Main Menu</text>
<text transform="translate(1141.70,234.90) scale(0.9482,1)" font-size="30.72" fill="#868686">App &amp; journey settings</text>
<text transform="translate(1121.73,436.80) scale(0.9327,1)" font-size="37.10" fill="#2f2f2f">My Vessel</text>
<text transform="translate(1123.20,548.80) scale(0.9461,1)" font-size="37.10" fill="#868686">Targets</text>
<text transform="translate(1122.84,660.80) scale(0.9082,1)" font-size="36.57" fill="#868686">CPA</text>
<text transform="translate(1121.79,772.80) scale(0.9126,1)" font-size="37.10" fill="#868686">Route</text>
<text transform="translate(1121.86,884.80) scale(0.9241,1)" font-size="37.10" fill="#868686">Recording</text>
<text transform="translate(1122.78,996.80) scale(0.9416,1)" font-size="36.57" fill="#868686">Connect</text>
<text transform="translate(1121.90,1108.80) scale(0.9091,1)" font-size="37.10" fill="#868686">Profiles</text>
<text transform="translate(1122.83,1220.80) scale(0.9137,1)" font-size="36.57" fill="#868686">Chart Preferences</text>
<text transform="translate(1120.95,1332.80) scale(0.9158,1)" font-size="37.10" fill="#868686">User Interface</text>
<text transform="translate(1120.79,1444.80) scale(0.9142,1)" font-size="37.10" fill="#868686">Favorites</text>
<text transform="translate(1123.30,1556.80) scale(0.9176,1)" font-size="37.10" fill="#868686">About Qastor</text>
<text transform="translate(1771.37,193.70) scale(0.9030,1)" font-size="31.57" fill="#056cf5">Go Back</text>
<text transform="translate(1936.30,190.30) scale(0.9476,1)" font-size="35.65" fill="#353535">My Vessel - Positioning device</text>
<text transform="translate(1947.58,240.60) scale(0.9824,1)" font-size="31.00" fill="#868686">Connection with positioning device</text>
<text transform="translate(1807.10,437.10) scale(0.9311,1)" font-size="37.25" fill="#353535">ADQ2</text>
<text transform="translate(1804.57,549.00) scale(0.9403,1)" font-size="36.96" fill="#353535">Interface</text>
<text transform="translate(1807.03,661.50) scale(0.9130,1)" font-size="36.96" fill="#353535">TCP Host Name</text>
<text transform="translate(1807.04,772.50) scale(0.8939,1)" font-size="36.96" fill="#353535">TCP Port</text>
<text transform="translate(1807.70,884.80) scale(0.9212,1)" font-size="36.96" fill="#353535">Allow Docking With All Devices</text>
<text transform="translate(2762.75,550.00) scale(0.8853,1)" font-size="36.96" fill="#5e5e5e">TCP server</text>
<text transform="translate(2742.16,661.90) scale(0.9662,1)" font-size="36.38" fill="#5e5e5e">192.168.2.4</text>
<text transform="translate(2840.27,773.30)" font-size="36.14" letter-spacing="2.427" fill="#5e5e5e">8040</text>
<text transform="translate(1710.04,996.00) scale(0.8980,1)" font-size="31.45" fill="#7d7d7d">PILOT PLUG - AIS</text>
<text transform="translate(1806.29,1087.20) scale(0.9511,1)" font-size="36.00" fill="#353535">Centerline Offset</text>
<text transform="translate(1805.25,1199.00) scale(0.9440,1)" font-size="36.38" fill="#353535">Distance To Bow</text>
<text transform="translate(1805.25,1310.70) scale(0.9533,1)" font-size="36.09" fill="#353535">Heading Correction</text>
<text transform="translate(2806.74,1088.60) scale(0.9956,1)" font-size="36.71" fill="#5e5e5e">0.00 m</text>
<text transform="translate(2768.71,1201.00) scale(0.9646,1)" font-size="37.25" fill="#5e5e5e">120.00 m</text>
<text transform="translate(2849.58,1312.40) scale(0.9791,1)" font-size="36.29" fill="#5e5e5e">0.0 °</text>
<text transform="translate(1709.72,1422.20) scale(0.9183,1)" font-size="31.01" fill="#7d7d7d">NAVIGATION DATA SETTINGS</text>
<text transform="translate(1805.11,1514.10) scale(0.9052,1)" font-size="37.10" fill="#353535">Rate Of Turn Grey Color Threshold</text>
<text transform="translate(2780.04,1515.20) scale(0.9664,1)" font-size="36.67" fill="#5e5e5e">1.00 °/m</text>
<text transform="translate(1709.36,1625.30) scale(0.9268,1)" font-size="31.59" fill="#7d7d7d">NAV TIMEOUT ALARM</text>
<text transform="translate(1807.12,1716.60) scale(0.9259,1)" font-size="36.81" fill="#353535">Time Limit</text>
<text transform="translate(1805.07,1828.40) scale(0.9365,1)" font-size="36.38" fill="#353535">Heartbeats Per Minute</text>
<text transform="translate(2875.56,1718.10) scale(0.9332,1)" font-size="37.29" fill="#5e5e5e">2 s</text>
<text transform="translate(2885.23,1829.30)" font-size="36.67" letter-spacing="2.363" fill="#5e5e5e">54</text>
<text transform="translate(1711.70,1939.90) scale(0.9041,1)" font-size="31.59" fill="#7d7d7d">ALARMS</text>
</svg>
<div style="position:absolute;left:1648px;top:1945px;width:1384px;height:60px;background:linear-gradient(180deg,rgba(232,232,230,0) 0%,rgba(232,232,230,0.55) 60%,rgba(232,232,230,0.92) 100%)"></div>
<div style="position:absolute;left:1648px;top:2004px;width:1384px;height:83px;background:#e8e8e6"></div>
</body></html>
